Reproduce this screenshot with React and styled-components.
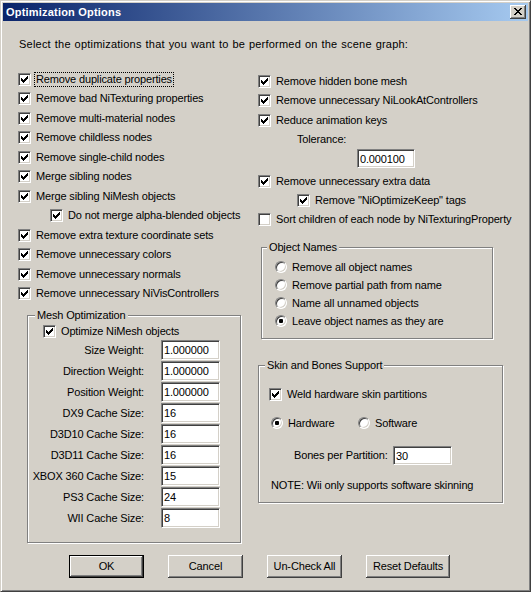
import React from "react";
import styled, { createGlobalStyle } from "styled-components";

const Global = createGlobalStyle`
  html, body { margin: 0; padding: 0; background: #D4D0C8; }
  body {
    font-family: "Liberation Sans", Arial, sans-serif;
    font-size: 11px;
    line-height: 13px;
    letter-spacing: -0.15px;
    color: #000;
  }
  * { box-sizing: border-box; }
`;

const Window = styled.div`
  width: 531px;
  height: 592px;
  background: #D4D0C8;
  border: 1px solid;
  border-color: #D4D0C8 #404040 #404040 #D4D0C8;
  box-shadow: inset 1px 1px #fff, inset -1px -1px #808080;
  padding: 2px;
  display: flex;
  flex-direction: column;
`;

const TitleBar = styled.div`
  height: 18px;
  flex: none;
  display: flex;
  align-items: center;
  justify-content: space-between;
  padding: 0 2px 0 3px;
  background: linear-gradient(to right, #0A246A, #A6CAF0);
  color: #fff;
  font-weight: bold;
  font-size: 11px;
  letter-spacing: 0.2px;
`;

const CaptionButton = styled.div`
  width: 16px;
  height: 14px;
  background: #D4D0C8;
  box-shadow: inset -1px -1px #404040, inset 1px 1px #fff, inset -2px -2px #808080, inset 2px 2px #D4D0C8;
  display: flex;
  padding: 3px 0 0 4px;
`;

const Body = styled.div`
  flex: 1;
  padding: 17px 0 0 15px;
`;

const Intro = styled.div`
  height: 13px;
  padding-left: 1px;
  letter-spacing: 0.22px;
  word-spacing: 0.6px;
`;

const Columns = styled.div`
  display: grid;
  grid-template-columns: 240px 1fr;
  margin-top: 18.25px;
`;

const Column = styled.div`
  display: flex;
  flex-direction: column;
  padding-top: ${(p) => p.$pt || 0}px;
`;

const Row = styled.div`
  display: flex;
  align-items: center;
  height: ${(p) => p.$h || 19.5}px;
  flex: none;
  padding-left: ${(p) => p.$indent || 0}px;
  margin-top: ${(p) => p.$mt || 0}px;
`;

const Box = styled.span`
  width: 13px;
  height: 13px;
  flex: none;
  background: #fff;
  border: 1px solid;
  border-color: #808080 #fff #fff #808080;
  box-shadow: inset 1px 1px #404040, inset -1px -1px #D4D0C8;
  padding: 2px;
  display: flex;
`;

const CheckText = styled.span`
  margin-left: 3px;
  padding: 0 1px;
  border: 1px dotted ${(p) => (p.$focus ? "#000" : "transparent")};
  white-space: nowrap;
`;

const Circle = styled.span`
  width: 12px;
  height: 12px;
  flex: none;
  border-radius: 50%;
  border: 1px solid;
  border-color: #808080 #fff #fff #808080;
  background: #fff;
  box-shadow: inset 1px 1px #404040, inset -1px -1px #D4D0C8;
  display: flex;
  align-items: center;
  justify-content: center;
`;

const Dot = styled.span`
  width: 4px;
  height: 4px;
  border-radius: 1px;
  background: #000;
`;

const RadioText = styled.span`
  margin-left: 5px;
  white-space: nowrap;
`;

const RadioItem = styled.div`
  display: flex;
  align-items: center;
  width: ${(p) => (p.$w ? p.$w + "px" : "auto")};
`;

const Group = styled.div`
  border: 1px solid #808080;
  box-shadow: inset 1px 1px #fff, 1px 1px #fff;
  margin: ${(p) => p.$mt}px 0 0 ${(p) => p.$ml}px;
  width: ${(p) => p.$w}px;
  padding-bottom: ${(p) => p.$pb}px;
  display: flex;
  flex-direction: column;
`;

const GroupLabel = styled.div`
  margin: -7px 0 0 ${(p) => p.$lx}px;
  padding: 0 2px;
  height: 13px;
  background: #D4D0C8;
  width: fit-content;
  white-space: nowrap;
`;

const FieldGrid = styled.div`
  display: grid;
  grid-template-columns: 116px 59px;
  column-gap: 17px;
  row-gap: 1px;
  grid-auto-rows: 20px;
  align-items: center;
  margin-top: 2px;
`;

const FieldLabel = styled.span`
  text-align: right;
  white-space: nowrap;
`;

const TextBox = styled.input`
  width: ${(p) => p.$w || 59}px;
  height: ${(p) => p.$h || 20}px;
  margin: ${(p) => p.$mt || 0}px 0 0 ${(p) => p.$ml || 0}px;
  font: inherit;
  letter-spacing: inherit;
  color: #000;
  background: #fff;
  border: 1px solid;
  border-color: #808080 #fff #fff #808080;
  box-shadow: inset 1px 1px #404040, inset -1px -1px #D4D0C8;
  padding: 0 0 0 2px;
  outline: none;
  flex: none;
`;

const InlineLabel = styled.span`
  width: ${(p) => p.$w}px;
  flex: none;
  white-space: nowrap;
`;

const Note = styled.div`
  height: 13px;
  margin-top: ${(p) => p.$mt}px;
  padding-left: ${(p) => p.$indent}px;
  white-space: nowrap;
`;

const ButtonRow = styled.div`
  display: flex;
  gap: 24px;
  margin-top: 12px;
  padding-left: 51px;
`;

const Button = styled.button`
  width: ${(p) => p.$w || 75}px;
  height: 23px;
  font: inherit;
  letter-spacing: inherit;
  color: #000;
  background: #D4D0C8;
  padding: 0;
  border: ${(p) => (p.$default ? "1px solid #000" : "none")};
  box-shadow: inset -1px -1px #404040, inset 1px 1px #fff, inset -2px -2px #808080, inset 2px 2px #D4D0C8;
  outline: none;
  cursor: default;
`;

const CheckGlyph = () => (
  <svg width="7" height="7" viewBox="0 0 7 7" shapeRendering="crispEdges">
    <path
      fill="#000"
      d="M6 0h1v1h-1z M5 1h2v1h-2z M0 2h1v1h-1z M4 2h3v1h-3z M0 3h2v1h-2z M3 3h3v1h-3z M0 4h5v1h-5z M1 5h3v1h-3z M2 6h1v1h-1z"
    />
  </svg>
);

const CloseGlyph = () => (
  <svg width="8" height="7" viewBox="0 0 8 7" shapeRendering="crispEdges">
    <path
      fill="#000"
      d="M0 0h2v1h-2z M6 0h2v1h-2z M1 1h2v1h-2z M5 1h2v1h-2z M2 2h4v1h-4z M3 3h2v1h-2z M2 4h4v1h-4z M1 5h2v1h-2z M5 5h2v1h-2z M0 6h2v1h-2z M6 6h2v1h-2z"
    />
  </svg>
);

const Check = ({ label, checked = true, focus, indent, h, mt }) => (
  <Row $indent={indent} $h={h} $mt={mt}>
    <Box>{checked && <CheckGlyph />}</Box>
    <CheckText $focus={focus}>{label}</CheckText>
  </Row>
);

const Radio = ({ label, checked, w }) => (
  <RadioItem $w={w}>
    <Circle>{checked && <Dot />}</Circle>
    <RadioText>{label}</RadioText>
  </RadioItem>
);

const leftChecks = [
  { label: "Remove duplicate properties", focus: true },
  { label: "Remove bad NiTexturing properties" },
  { label: "Remove multi-material nodes" },
  { label: "Remove childless nodes" },
  { label: "Remove single-child nodes" },
  { label: "Merge sibling nodes" },
  { label: "Merge sibling NiMesh objects" },
  { label: "Do not merge alpha-blended objects", indent: 32 },
  { label: "Remove extra texture coordinate sets" },
  { label: "Remove unnecessary colors" },
  { label: "Remove unnecessary normals" },
  { label: "Remove unnecessary NiVisControllers" },
];

const fields = [
  ["Size Weight:", "1.000000"],
  ["Direction Weight:", "1.000000"],
  ["Position Weight:", "1.000000"],
  ["DX9 Cache Size:", "16"],
  ["D3D10 Cache Size:", "16"],
  ["D3D11 Cache Size:", "16"],
  ["XBOX 360 Cache Size:", "15"],
  ["PS3 Cache Size:", "24"],
  ["WII Cache Size:", "8"],
];

const names = [
  ["Remove all object names", false],
  ["Remove partial path from name", false],
  ["Name all unnamed objects", false],
  ["Leave object names as they are", true],
];

export default function App() {
  return (
    <>
      <Global />
      <Window>
        <TitleBar>
          <span>Optimization Options</span>
          <CaptionButton>
            <CloseGlyph />
          </CaptionButton>
        </TitleBar>
        <Body>
          <Intro>Select the optimizations that you want to be performed on the scene graph:</Intro>
          <Columns>
            <Column>
              {leftChecks.map((c) => (
                <Check key={c.label} {...c} />
              ))}
              <Group $mt={11.75} $ml={9} $w={214} $pb={14}>
                <GroupLabel $lx={7}>Mesh Optimization</GroupLabel>
                <Check label="Optimize NiMesh objects" indent={15} h={13} mt={3} />
                <FieldGrid>
                  {fields.map(([l, v]) => (
                    <React.Fragment key={l}>
                      <FieldLabel>{l}</FieldLabel>
                      <TextBox readOnly defaultValue={v} />
                    </React.Fragment>
                  ))}
                </FieldGrid>
              </Group>
            </Column>
            <Column $pt={2}>
              <Check label="Remove hidden bone mesh" />
              <Check label="Remove unnecessary NiLookAtControllers" />
              <Check label="Reduce animation keys" />
              <Row $indent={39}>Tolerance:</Row>
              <TextBox readOnly defaultValue="0.000100" $w={58} $h={19} $ml={99} />
              <Check label="Remove unnecessary extra data" h={19} mt={3.25} />
              <Check label={'Remove "NiOptimizeKeep" tags'} h={19} indent={39} />
              <Check label="Sort children of each node by NiTexturingProperty" checked={false} h={19} />
              <Group $mt={18.5} $ml={3} $w={232} $pb={8}>
                <GroupLabel $lx={5}>Object Names</GroupLabel>
                <Row $h={4} />
                {names.map(([l, c]) => (
                  <Row key={l} $h={18} $indent={13}>
                    <Radio label={l} checked={c} />
                  </Row>
                ))}
              </Group>
              <Group $mt={26} $ml={0} $w={245} $pb={10.5}>
                <GroupLabel $lx={6}>Skin and Bones Support</GroupLabel>
                <Check label="Weld hardware skin partitions" indent={10} h={13} mt={15.5} />
                <Row $h={13} $mt={16} $indent={12}>
                  <Radio label="Hardware" checked w={87} />
                  <Radio label="Software" />
                </Row>
                <Row $h={19} $mt={16.5} $indent={35}>
                  <InlineLabel $w={99}>Bones per Partition:</InlineLabel>
                  <TextBox readOnly defaultValue="30" $w={59} $h={19} />
                </Row>
                <Note $mt={13.5} $indent={12}>NOTE: Wii only supports software skinning</Note>
              </Group>
            </Column>
          </Columns>
          <ButtonRow>
            <Button $default>OK</Button>
            <Button>Cancel</Button>
            <Button>Un-Check All</Button>
            <Button $w={84}>Reset Defaults</Button>
          </ButtonRow>
        </Body>
      </Window>
    </>
  );
}
